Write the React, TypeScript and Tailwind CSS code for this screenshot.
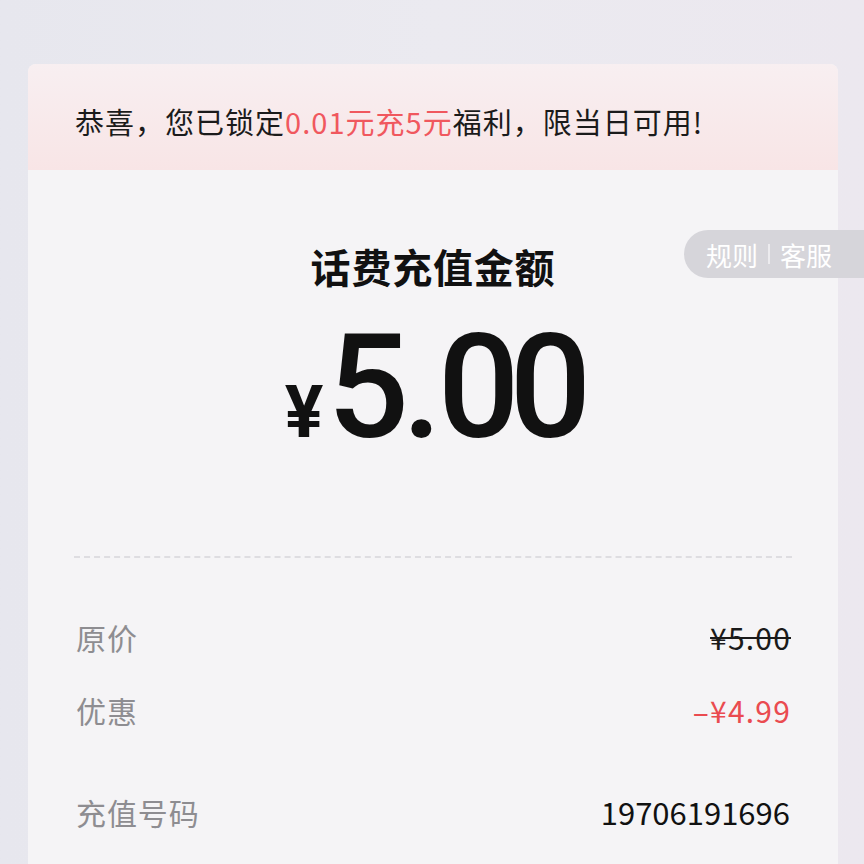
import React from "react";

const cjk = { fontFamily: '"Noto Sans CJK SC", "Noto Sans", sans-serif' };
const num = { fontFamily: 'Roboto, "Noto Sans CJK SC", sans-serif' };

export default function App() {
  return (
    <div
      className="w-[864px] h-[864px] overflow-hidden bg-gradient-to-r from-[#e7e7ee] via-[#ebeaf0] to-[#ece8ef] pt-[64px] pl-[28px] pr-[26px]"
      style={cjk}
    >
      <div className="relative rounded-[8px] h-[900px] bg-[#f5f4f6]">
        <div className="h-[106px] rounded-t-[8px] bg-gradient-to-b from-[#f8eff1] to-[#f8e5e6] flex items-center px-[47px] pt-[8px]">
          <span className="text-[29px] leading-none text-[#1b1b1b] tracking-[0.035em]">
            恭喜，您已锁定<span className="text-[#f0585e]">0.01元充5元</span>福利，限当日可用!
          </span>
        </div>
        <div className="relative">
          <div className="absolute top-[60px] right-[-26px] h-[48px] w-[180px] rounded-l-full bg-[#d6d5da] flex items-center pl-[22px] text-[26px] text-white">
            <span>规则</span>
            <span className="mx-[10px] h-[20px] w-[2px] bg-[#ecebee]"></span>
            <span>客服</span>
          </div>
          <div className="pt-[68px] text-center text-[40px] leading-[56px] font-bold text-[#111] tracking-[0.02em]">
            话费充值金额
          </div>
          <div className="mt-[22px] flex justify-center items-baseline text-[#111]" style={num}>
            <span className="text-[72px] font-bold leading-none">¥</span>
            <span className="ml-[4px] text-[144px] font-medium leading-none">
              <span className="tracking-[-0.05em]">5</span>
              <span className="tracking-[-0.03em]">.</span>
              <span className="tracking-[-0.07em]">00</span>
            </span>
          </div>
          <div className="relative mt-[96px] mx-[46px] border-t-2 border-dashed border-[#dedde1]"></div>
          <div className="px-[48px]">
            <div className="mt-[51px] h-[56px] flex items-center justify-between">
              <span className="text-[30px] text-[#8e8d91] tracking-[0.03em]">原价</span>
              <span className="text-[30px] text-[#1a1a1a] line-through decoration-[2px] tracking-[0.04em] mr-[-1px]">¥5.00</span>
            </div>
            <div className="mt-[17px] h-[56px] flex items-center justify-between">
              <span className="text-[30px] text-[#8e8d91] tracking-[0.03em]">优惠</span>
              <span className="text-[30px] text-[#ea4b50] tracking-[0.04em] mr-[-1px]">–¥4.99</span>
            </div>
            <div className="mt-[46px] h-[56px] flex items-center justify-between">
              <span className="text-[30px] text-[#8e8d91] tracking-[0.03em]">充值号码</span>
              <span className="text-[31px] text-[#111]">19706191696</span>
            </div>
          </div>
        </div>
      </div>
    </div>
  );
}
